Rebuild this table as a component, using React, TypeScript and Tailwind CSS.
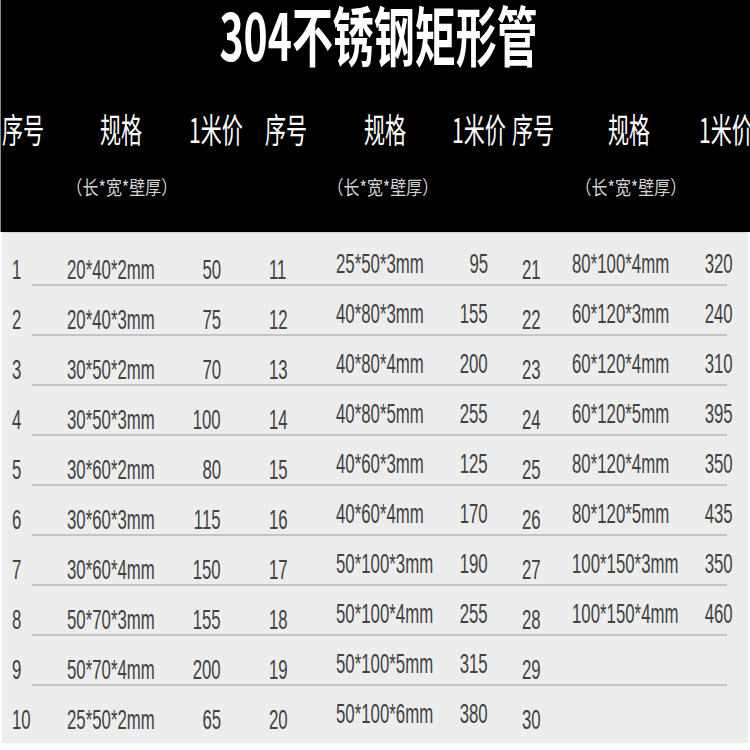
import React from "react";

type Row = [string, string, string, string, string, string, string, string, string];

const rows: Row[] = [
  ["1", "20*40*2mm", "50", "11", "25*50*3mm", "95", "21", "80*100*4mm", "320"],
  ["2", "20*40*3mm", "75", "12", "40*80*3mm", "155", "22", "60*120*3mm", "240"],
  ["3", "30*50*2mm", "70", "13", "40*80*4mm", "200", "23", "60*120*4mm", "310"],
  ["4", "30*50*3mm", "100", "14", "40*80*5mm", "255", "24", "60*120*5mm", "395"],
  ["5", "30*60*2mm", "80", "15", "40*60*3mm", "125", "25", "80*120*4mm", "350"],
  ["6", "30*60*3mm", "115", "16", "40*60*4mm", "170", "26", "80*120*5mm", "435"],
  ["7", "30*60*4mm", "150", "17", "50*100*3mm", "190", "27", "100*150*3mm", "350"],
  ["8", "50*70*3mm", "155", "18", "50*100*4mm", "255", "28", "100*150*4mm", "460"],
  ["9", "50*70*4mm", "200", "19", "50*100*5mm", "315", "29", "", ""],
  ["10", "25*50*2mm", "65", "20", "50*100*6mm", "380", "30", "", ""],
];

const cjk = { fontFamily: '"Noto Sans CJK SC", "Noto Sans", sans-serif' };
const latin = { fontFamily: '"Liberation Sans", Arial, sans-serif' };

// left-aligned squeezed text
const L = ({ children }: { children: React.ReactNode }) => (
  <span className="inline-block whitespace-nowrap origin-left scale-x-[0.6]">{children}</span>
);

// right-aligned squeezed text
const R = ({ children }: { children: React.ReactNode }) => (
  <span className="inline-block whitespace-nowrap origin-right scale-x-[0.6]">{children}</span>
);

const headCells = [
  { w: "w-[98px]", t: "序号" },
  { w: "w-[89px]", t: "规格" },
  { w: "w-[76px]", t: "1米价" },
  { w: "w-[99px]", t: "序号" },
  { w: "w-[88px]", t: "规格" },
  { w: "w-[60px]", t: "1米价" },
  { w: "w-[96px]", t: "序号" },
  { w: "w-[91px]", t: "规格" },
  { w: "w-[51px]", t: "1米价" },
];

export default function App() {
  return (
    <div className="w-[750px] h-[750px] bg-white overflow-hidden">
      {/* black header */}
      <div className="h-[232px] bg-black border-l border-[#8a8a8a] text-white" style={cjk}>
        <div className="flex justify-center pl-[7px] pt-[1px] h-[67px]">
          <span className="inline-block whitespace-nowrap text-[65px] leading-none font-bold origin-center scale-x-[0.63]">
            304不锈钢矩形管
          </span>
        </div>
        <div className="flex mt-[45px] pl-[1px] h-[34px] text-[34px] leading-none font-normal">
          {headCells.map((c, i) => (
            <div key={i} className={`${c.w} shrink-0 whitespace-nowrap`}>
              <span className="inline-block origin-left scale-x-[0.62]">{c.t}</span>
            </div>
          ))}
        </div>
        <div className="flex mt-[31px] pl-[21px] h-[19px] text-[19px] leading-none text-[#d4d4d4] font-normal">
          <div className="w-[200px] shrink-0 flex justify-center">
            <span className="inline-block whitespace-nowrap scale-x-[0.84]">（长*宽*壁厚）</span>
          </div>
          <div className="w-[200px] shrink-0 ml-[61px] flex justify-center">
            <span className="inline-block whitespace-nowrap scale-x-[0.84]">（长*宽*壁厚）</span>
          </div>
          <div className="w-[200px] shrink-0 ml-[48px] flex justify-center">
            <span className="inline-block whitespace-nowrap scale-x-[0.84]">（长*宽*壁厚）</span>
          </div>
        </div>
      </div>

      {/* table body */}
      <div className="h-[511px] ml-[2px] mr-[2px] bg-[#ededed] border-t border-[#d8d8d8] pt-[3px] text-[28px] leading-none text-[#424242]" style={latin}>
        {rows.map((r, i) => (
          <div key={i}>
            <div className="flex h-[48px]">
              <div className="w-[65px] shrink-0 pl-[10px] pt-[20px]"><L>{r[0]}</L></div>
              <div className="w-[103px] shrink-0 pt-[20px]"><L>{r[1]}</L></div>
              <div className="w-[51px] shrink-0 pt-[20px] flex justify-end items-start"><R>{r[2]}</R></div>
              <div className="w-[115px] shrink-0 pl-[48px] pt-[20px]"><L>{r[3]}</L></div>
              <div className="w-[90px] shrink-0 pt-[14px]"><L>{r[4]}</L></div>
              <div className="w-[62px] shrink-0 pt-[14px] flex justify-end items-start"><R>{r[5]}</R></div>
              <div className="w-[84px] shrink-0 pl-[34px] pt-[20px]"><L>{r[6]}</L></div>
              <div className="w-[100px] shrink-0 pt-[14px]"><L>{r[7]}</L></div>
              <div className="w-[61px] shrink-0 pt-[14px] flex justify-end items-start"><R>{r[8]}</R></div>
            </div>
            {i < rows.length - 1 && <div className="ml-[30px] w-[695px] h-[2px] bg-[#c4c4c4]" />}
          </div>
        ))}
      </div>
    </div>
  );
}
